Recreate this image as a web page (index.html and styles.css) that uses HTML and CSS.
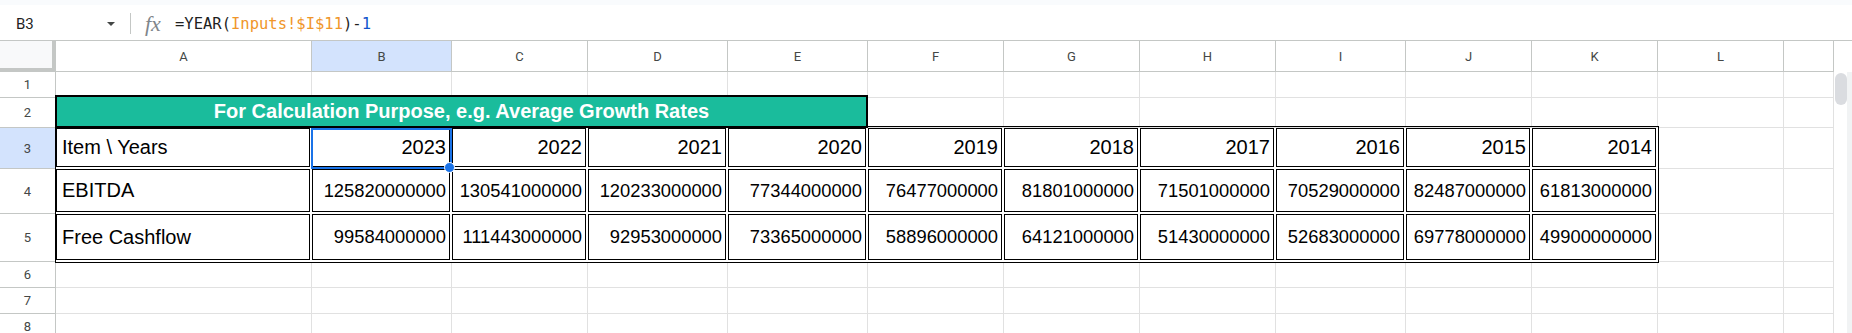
FILE: index.html
```html
<!DOCTYPE html>
<html lang="en">
<head>
  <meta charset="UTF-8">
  <title>Calculation Sheet</title>
  <link rel="stylesheet" href="styles.css">
</head>
<body>

<div class="toolbar-edge"></div>

<div class="formula-bar">
  <div class="namebox"><span>B3</span><span class="caret"></span></div>
  <span class="divider"></span>
  <span class="fx">fx</span>
  <div class="formula">=YEAR(<span class="ref">Inputs!$I$11</span>)-<span class="num">1</span></div>
</div>

<div class="sheet">
  <!-- column headers -->
  <div class="hd corner"></div>
  <div class="hd">A</div>
  <div class="hd active">B</div>
  <div class="hd">C</div>
  <div class="hd">D</div>
  <div class="hd">E</div>
  <div class="hd">F</div>
  <div class="hd">G</div>
  <div class="hd">H</div>
  <div class="hd">I</div>
  <div class="hd">J</div>
  <div class="hd">K</div>
  <div class="hd">L</div>
  <div class="hd"></div>
  <div class="hd-blank"></div>

  <div class="vscroll"><div class="thumb"></div></div>

  <!-- row 1 -->
  <div class="rh">1</div>
  <div class="c"></div><div class="c"></div><div class="c"></div><div class="c"></div><div class="c"></div><div class="c"></div>
  <div class="c"></div><div class="c"></div><div class="c"></div><div class="c"></div><div class="c"></div><div class="c"></div><div class="c"></div>

  <!-- row 2 -->
  <div class="rh">2</div>
  <div class="title">For Calculation Purpose, e.g. Average Growth Rates</div>
  <div class="c"></div><div class="c"></div><div class="c"></div><div class="c"></div>
  <div class="c"></div><div class="c"></div><div class="c"></div><div class="c"></div>

  <!-- row 3 -->
  <div class="rh active">3</div>
  <div class="cell label">Item \ Years</div>
  <div class="cell year">2023</div>
  <div class="cell year">2022</div>
  <div class="cell year">2021</div>
  <div class="cell year">2020</div>
  <div class="cell year">2019</div>
  <div class="cell year">2018</div>
  <div class="cell year">2017</div>
  <div class="cell year">2016</div>
  <div class="cell year">2015</div>
  <div class="cell year">2014</div>
  <div class="c"></div><div class="c"></div>

  <!-- row 4 -->
  <div class="rh">4</div>
  <div class="cell label">EBITDA</div>
  <div class="cell">125820000000</div>
  <div class="cell">130541000000</div>
  <div class="cell">120233000000</div>
  <div class="cell">77344000000</div>
  <div class="cell">76477000000</div>
  <div class="cell">81801000000</div>
  <div class="cell">71501000000</div>
  <div class="cell">70529000000</div>
  <div class="cell">82487000000</div>
  <div class="cell">61813000000</div>
  <div class="c"></div><div class="c"></div>

  <!-- row 5 -->
  <div class="rh">5</div>
  <div class="cell label">Free Cashflow</div>
  <div class="cell">99584000000</div>
  <div class="cell">111443000000</div>
  <div class="cell">92953000000</div>
  <div class="cell">73365000000</div>
  <div class="cell">58896000000</div>
  <div class="cell">64121000000</div>
  <div class="cell">51430000000</div>
  <div class="cell">52683000000</div>
  <div class="cell">69778000000</div>
  <div class="cell">49900000000</div>
  <div class="c"></div><div class="c"></div>

  <!-- rows 6 - 8 -->
  <div class="rh">6</div>
  <div class="c"></div><div class="c"></div><div class="c"></div><div class="c"></div><div class="c"></div><div class="c"></div>
  <div class="c"></div><div class="c"></div><div class="c"></div><div class="c"></div><div class="c"></div><div class="c"></div><div class="c"></div>
  <div class="rh">7</div>
  <div class="c"></div><div class="c"></div><div class="c"></div><div class="c"></div><div class="c"></div><div class="c"></div>
  <div class="c"></div><div class="c"></div><div class="c"></div><div class="c"></div><div class="c"></div><div class="c"></div><div class="c"></div>
  <div class="rh">8</div>
  <div class="c"></div><div class="c"></div><div class="c"></div><div class="c"></div><div class="c"></div><div class="c"></div>
  <div class="c"></div><div class="c"></div><div class="c"></div><div class="c"></div><div class="c"></div><div class="c"></div><div class="c"></div>

  <!-- outer table border and active cell -->
  <div class="frame"></div>
  <div class="selection"></div>
</div>

</body>
</html>
```

FILE: styles.css
```css
* {
  box-sizing: border-box;
}
body {
  margin: 0;
  overflow: hidden;
  background: #fff;
  font-family: "Liberation Sans", Arial, sans-serif;
}

/* formula bar */
.toolbar-edge {
  height: 5px;
  background: #f9fbfd;
}
.formula-bar {
  display: flex;
  align-items: center;
  height: 36px;
  padding-top: 2px;
  border-bottom: 1px solid #c4c7c5;
  color: #1f1f1f;
}
.namebox {
  display: flex;
  align-items: center;
  width: 116px;
  padding: 0 1px 0 16px;
  font-family: Roboto, sans-serif;
  font-size: 15px;
}
.caret {
  margin-left: auto;
  border-left: 4px solid transparent;
  border-right: 4px solid transparent;
  border-top: 4px solid #444746;
}
.divider {
  width: 1px;
  height: 21px;
  margin-left: 14px;
  background: #c4c7c5;
}
.fx {
  width: 18px;
  margin-left: 14px;
  font-family: "Liberation Serif", serif;
  font-style: italic;
  font-size: 22px;
  color: #80868b;
  line-height: 1;
}
.formula {
  margin-left: 12px;
  font-family: "DejaVu Sans Mono", monospace;
  font-size: 15.5px;
}
.formula .ref {
  color: #f0962a;
}
.formula .num {
  color: #1155cc;
}

/* grid */
.sheet {
  position: relative;
  display: grid;
  grid-template-columns: 56px 256px 140px 136px 140px 140px 136px 136px 136px 130px 126px 126px 126px 50px 18px;
  grid-template-rows: 31px 26px 30px 41px 45px 48px 26px 26px 26px;
}
.hd, .rh {
  display: flex;
  align-items: center;
  justify-content: center;
  border-right: 1px solid #c4c7c5;
  border-bottom: 1px solid #c4c7c5;
  font-family: Roboto, sans-serif;
  font-size: 13px;
  color: #444746;
}
.hd.corner {
  background: #f8f9fa;
  border-right-width: 4px;
  border-bottom-width: 4px;
}
.hd.active, .rh.active {
  background: #d3e3fd;
}
.c {
  border-right: 1px solid #e1e1e1;
  border-bottom: 1px solid #e1e1e1;
}
.vscroll {
  grid-column: 15;
  grid-row: 2 / -1;
  background: #fff;
  box-shadow: inset -5px 0 #f1f3f4;
  padding: 1px 0 0 1px;
}
.thumb {
  width: 12px;
  height: 32px;
  border-radius: 6px;
  background: #dadce0;
}

/* title band over A2:E2 */
.title {
  grid-column: span 5;
  margin: -3px 0 0 -1px;
  display: flex;
  align-items: center;
  justify-content: center;
  border: 2px solid #000;
  background: #1abc9c;
  color: #fff;
  font-weight: bold;
  font-size: 20px;
}

/* bordered data cells */
.cell {
  display: flex;
  align-items: center;
  justify-content: flex-end;
  margin: 0 2px 2px 0;
  padding: 0 3px;
  border: 1px solid #000;
  background: #fff;
  font-size: 18.33px;
  color: #000;
  white-space: nowrap;
}
.cell.label {
  justify-content: flex-start;
  padding-left: 5px;
  font-size: 20px;
}
.cell.year {
  font-size: 20px;
}

.frame {
  position: absolute;
  grid-area: 4 / 2 / 7 / 13;
  top: -2px;
  left: -1px;
  right: -1px;
  bottom: -1px;
  border: 1px solid #000;
  pointer-events: none;
}
.selection {
  position: absolute;
  grid-area: 4 / 3 / 5 / 4;
  top: 0;
  left: -1px;
  right: 0;
  bottom: 0;
  border: 2px solid #1a73e8;
  pointer-events: none;
}
.selection::after {
  content: "";
  position: absolute;
  right: -5px;
  bottom: -6px;
  width: 9px;
  height: 9px;
  border-radius: 50%;
  border: 1px solid #fff;
  background: #1a73e8;
}
```
